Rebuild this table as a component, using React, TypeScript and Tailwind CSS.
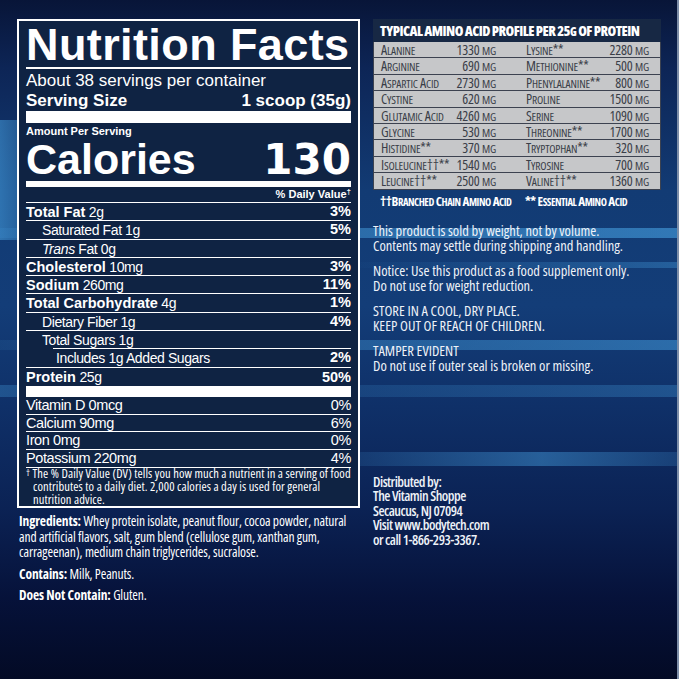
import React from "react";

const nutr = [
  { b: "Total Fat", r: " 2g", dv: "3%", ind: "", line: "" },
  { b: "", r: "Saturated Fat 1g", dv: "5%", ind: "pl-[16px]", line: "" },
  { b: "", r: "Fat 0g", it: "Trans", dv: "", ind: "pl-[16px]", line: "" },
  { b: "Cholesterol", r: " 10mg", dv: "3%", ind: "", line: "" },
  { b: "Sodium", r: " 260mg", dv: "11%", ind: "", line: "" },
  { b: "Total Carbohydrate", r: " 4g", dv: "1%", ind: "", line: "" },
  { b: "", r: "Dietary Fiber 1g", dv: "4%", ind: "pl-[16px]", line: "" },
  { b: "", r: "Total Sugars 1g", dv: "", ind: "pl-[16px]", line: "ml-[27px]" },
  { b: "", r: "Includes 1g Added Sugars", dv: "2%", ind: "pl-[30px]", line: "" },
];

const vit = [
  ["Vitamin D 0mcg", "0%"],
  ["Calcium 90mg", "6%"],
  ["Iron 0mg", "0%"],
  ["Potassium 220mg", "4%"],
];

const amino: [string, string, string, string][] = [
  ["Alanine", "1330", "Lysine**", "2280"],
  ["Arginine", "690", "Methionine**", "500"],
  ["Aspartic Acid", "2730", "Phenylalanine**", "800"],
  ["Cystine", "620", "Proline", "1500"],
  ["Glutamic Acid", "4260", "Serine", "1090"],
  ["Glycine", "530", "Threonine**", "1700"],
  ["Histidine**", "370", "Tryptophan**", "320"],
  ["Isoleucine††**", "1540", "Tyrosine", "700"],
  ["Leucine††**", "2500", "Valine††**", "1360"],
];

function SC({ t, s }: { t: string; s: string }) {
  const parts = t.match(/[a-z]+|[^a-z]+/g) || [];
  return (
    <>
      {parts.map((p, i) =>
        /[a-z]/.test(p) ? (
          <span key={i} className={s}>
            {p.toUpperCase()}
          </span>
        ) : (
          <span key={i}>{p}</span>
        )
      )}
    </>
  );
}

function Panel() {
  return (
    <div className="border-2 border-white bg-[#0f2343] px-[7px] font-['Liberation_Sans',Arial,sans-serif] text-white">
      <div className="text-[45px] font-bold leading-[45px] mt-[1px] tracking-[0.4px] whitespace-nowrap">Nutrition Facts</div>
      <div className="h-[1.5px] bg-white" />
      <div className="text-[17px] leading-[20px] mt-[2px]">About 38 servings per container</div>
      <div className="text-[17px] leading-[20px] font-bold flex justify-between">
        <span>Serving Size</span>
        <span>1 scoop (35g)</span>
      </div>
      <div className="h-[12px] bg-white mt-[0.5px]" />
      <div className="text-[11px] font-bold leading-[13px] mt-[2px]">Amount Per Serving</div>
      <div className="flex justify-between items-baseline text-[43px] font-bold leading-[42px]">
        <span>Calories</span>
        <span className="font-['DejaVu_Sans',sans-serif] text-[42px]">130</span>
      </div>
      <div className="h-[6px] bg-white" />
      <div className="text-right text-[11px] font-bold leading-[15px] border-b border-white">
        % Daily Value<span className="text-[8px] align-top leading-[10px]">†</span>
      </div>
      {nutr.map((n, i) => (
        <div key={i}>
          <div className={`flex justify-between h-[17.3px] leading-[17.3px] ${n.ind}`}>
            <span className="whitespace-nowrap">
              {n.b && <span className="font-bold text-[14.5px]">{n.b}</span>}
              {n.it && <span className="italic text-[14px] tracking-[-0.4px]">{n.it} </span>}
              <span className="text-[14px] tracking-[-0.4px]">{n.r}</span>
            </span>
            <span className="font-bold text-[14.5px]">{n.dv}</span>
          </div>
          <div className={`h-[1px] bg-white ${n.line}`} />
        </div>
      ))}
      <div className="flex justify-between h-[18.3px] leading-[18.3px]">
        <span>
          <span className="font-bold text-[14.5px]">Protein</span>
          <span className="text-[14px] tracking-[-0.4px]"> 25g</span>
        </span>
        <span className="font-bold text-[14.5px]">50%</span>
      </div>
      <div className="h-[11px] bg-white" />
      {vit.map(([a, b]) => (
        <div key={a} className="flex justify-between h-[17.7px] leading-[17px] border-b border-white text-[14.5px] tracking-[-0.4px]">
          <span>{a}</span>
          <span>{b}</span>
        </div>
      ))}
      <div className="pt-[0.5px] text-[12.5px] leading-[12.7px] tracking-[0.1px] font-['Open_Sans',sans-serif] [font-stretch:75%] whitespace-nowrap">
        <div>
          <span className="text-[9px] align-top leading-[10px]">†</span> The % Daily Value (DV) tells you how much a nutrient in a serving of food
        </div>
        <div className="pl-[7px]">contributes to a daily diet. 2,000 calories a day is used for general</div>
        <div className="pl-[7px]">nutrition advice.</div>
      </div>
    </div>
  );
}

function Ingredients() {
  return (
    <div className="ml-[2px] mt-[6px] text-[13.5px] leading-[15.3px] tracking-[-0.1px] font-medium text-white whitespace-nowrap font-['Open_Sans',sans-serif] [font-stretch:75%]">
      <div>
        <span className="font-bold">Ingredients:</span> Whey protein isolate, peanut flour, cocoa powder, natural
      </div>
      <div>and artificial flavors, salt, gum blend (cellulose gum, xanthan gum,</div>
      <div>carrageenan), medium chain triglycerides, sucralose.</div>
      <div className="mt-[6.5px]">
        <span className="font-bold">Contains:</span> Milk, Peanuts.
      </div>
      <div className="mt-[5.5px]">
        <span className="font-bold">Does Not Contain:</span> Gluten.
      </div>
    </div>
  );
}

function Amino() {
  return (
    <div className="font-['Open_Sans',sans-serif] [font-stretch:75%]">
      <div className="h-[23px] bg-[#172844] pl-[7px] text-[14px] font-extrabold leading-[23px] tracking-[-0.55px] text-white whitespace-nowrap">
        <SC t="TYPICAL AMINO ACID PROFILE PER 25g OF PROTEIN" s="text-[11.5px]" />
      </div>
      <div className="bg-[#c6c7c9] border-x border-[#3c4250]">
        {amino.map((r, i) => (
          <div key={i} className="flex h-[16.4px] leading-[15.4px] border-b border-[#3c4250] pl-[7px] pr-[11px] text-[14px] tracking-[-0.2px] text-[#3a3e48] whitespace-nowrap">
            <div className="w-[115px] flex justify-between">
              <span>
                <SC t={r[0]} s="text-[11.5px]" />
              </span>
              <span>
                <SC t={`${r[1]} mg`} s="text-[11.5px]" />
              </span>
            </div>
            <div className="ml-[30px] flex-1 flex justify-between">
              <span>
                <SC t={r[2]} s="text-[11.5px]" />
              </span>
              <span>
                <SC t={`${r[3]} mg`} s="text-[11.5px]" />
              </span>
            </div>
          </div>
        ))}
      </div>
      <div className="flex pl-[7px] mt-[3px] text-[13px] leading-[16px] font-bold tracking-[-0.45px] text-white whitespace-nowrap">
        <span className="w-[145px]">
          <SC t="††Branched Chain Amino Acid" s="text-[10.5px]" />
        </span>
        <span>
          <SC t="** Essential Amino Acid" s="text-[10.5px]" />
        </span>
      </div>
    </div>
  );
}

function RightText() {
  return (
    <div className="text-[#eef2f8] whitespace-nowrap font-['Open_Sans',sans-serif] [font-stretch:75%]">
      <div className="flex flex-col gap-[10px] mt-[13px] text-[14.5px] leading-[15px]">
        <div>
          <div>This product is sold by weight, not by volume.</div>
          <div>Contents may settle during shipping and handling.</div>
        </div>
        <div>
          <div>Notice: Use this product as a food supplement only.</div>
          <div>Do not use for weight reduction.</div>
        </div>
        <div>
          <div>STORE IN A COOL, DRY PLACE.</div>
          <div>KEEP OUT OF REACH OF CHILDREN.</div>
        </div>
        <div>
          <div>TAMPER EVIDENT</div>
          <div>Do not use if outer seal is broken or missing.</div>
        </div>
      </div>
      <div className="mt-[102px] text-[14px] leading-[14.6px] tracking-[-0.5px] font-semibold">
        <div>Distributed by:</div>
        <div>The Vitamin Shoppe</div>
        <div>Secaucus, NJ 07094</div>
        <div>Visit www.bodytech.com</div>
        <div>or call 1-866-293-3367.</div>
      </div>
    </div>
  );
}

export default function App() {
  return (
    <div className="w-[679px] h-[679px] overflow-hidden border-r-2 border-[#7d8ea8] [background:linear-gradient(90deg,rgba(70,160,225,0.55)_0%,rgba(70,160,225,0.15)_6%,rgba(70,160,225,0)_12%)_0_120px/100%_120px_no-repeat,linear-gradient(90deg,rgba(70,160,225,0.15)_0%,rgba(70,160,225,0.45)_40%,rgba(70,160,225,0.6)_100%)_0_228px/100%_10px_no-repeat,linear-gradient(90deg,rgba(70,160,225,0)_50%,rgba(70,160,225,0.35)_100%)_0_262px/100%_6px_no-repeat,linear-gradient(90deg,rgba(70,160,225,0.1)_0%,rgba(70,160,225,0.35)_50%,rgba(70,160,225,0.5)_100%)_0_340px/100%_10px_no-repeat,linear-gradient(90deg,rgba(70,160,225,0.3)_0%,rgba(70,160,225,0.1)_30%,rgba(70,160,225,0.3)_100%)_0_385px/100%_12px_no-repeat,linear-gradient(90deg,rgba(70,160,225,0)_40%,rgba(70,160,225,0.45)_80%,rgba(70,160,225,0.2)_100%)_0_452px/100%_14px_no-repeat,linear-gradient(180deg,#081538_0%,#0d2556_10%,#123b74_28%,#133d78_45%,#0f3068_60%,#0b2254_75%,#06123a_88%,#030a25_100%)] font-['Liberation_Sans',Arial,sans-serif]">
      <div className="flex pl-[17px] pt-[19px]">
        <div className="w-[343px] flex flex-col">
          <Panel />
          <Ingredients />
        </div>
        <div className="ml-[13px] w-[288px] flex flex-col">
          <Amino />
          <RightText />
        </div>
      </div>
    </div>
  );
}
